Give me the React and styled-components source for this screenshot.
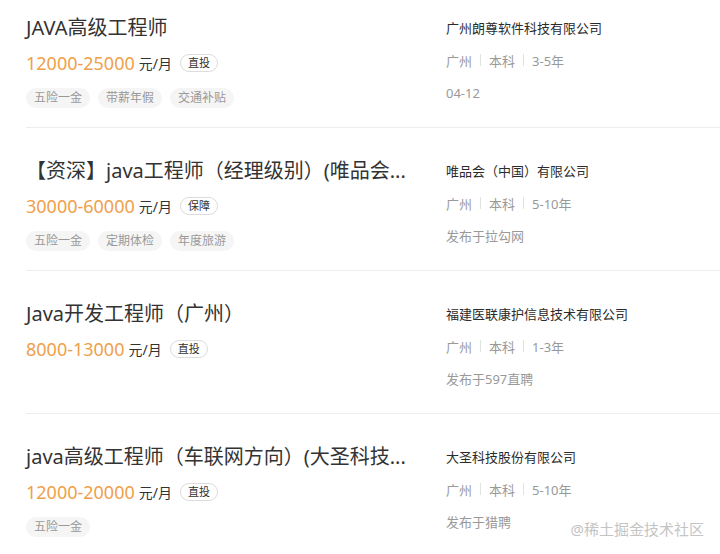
import React from "react";
import styled, { createGlobalStyle } from "styled-components";

const GlobalStyle = createGlobalStyle`
    * { box-sizing: border-box; }
    body {
        margin: 0;
        background: #fff;
        overflow: hidden;
        font-family: "Noto Sans", "Noto Sans CJK SC", sans-serif;
    }
`;

const jobs = [
    {
        title: "JAVA高级工程师",
        salary: "12000-25000",
        badge: "直投",
        tags: ["五险一金", "带薪年假", "交通补贴"],
        company: "广州朗尊软件科技有限公司",
        meta: ["广州", "本科", "3-5年"],
        extra: "04-12",
    },
    {
        title: "【资深】java工程师（经理级别）(唯品会...",
        salary: "30000-60000",
        badge: "保障",
        tags: ["五险一金", "定期体检", "年度旅游"],
        company: "唯品会（中国）有限公司",
        meta: ["广州", "本科", "5-10年"],
        extra: "发布于拉勾网",
    },
    {
        title: "Java开发工程师（广州）",
        salary: "8000-13000",
        badge: "直投",
        tags: [],
        company: "福建医联康护信息技术有限公司",
        meta: ["广州", "本科", "1-3年"],
        extra: "发布于597直聘",
    },
    {
        title: "java高级工程师（车联网方向）(大圣科技...",
        salary: "12000-20000",
        badge: "直投",
        tags: ["五险一金"],
        company: "大圣科技股份有限公司",
        meta: ["广州", "本科", "5-10年"],
        extra: "发布于猎聘",
    },
];

function App() {
    return (
        <>
            <GlobalStyle />
            <Page>
                <List>
                    {jobs.map((job, i) => (
                        <Item key={i}>
                            <Left>
                                <Title>{job.title}</Title>
                                <SalaryRow>
                                    <Salary>{job.salary}</Salary>
                                    <Unit>元/月</Unit>
                                    <Badge>{job.badge}</Badge>
                                </SalaryRow>
                                <Tags>
                                    {job.tags.map((t) => (
                                        <Tag key={t}>{t}</Tag>
                                    ))}
                                </Tags>
                            </Left>
                            <Right>
                                <Company>{job.company}</Company>
                                <Meta>
                                    {job.meta.map((m, j) => (
                                        <React.Fragment key={m}>
                                            {j > 0 && <Sep />}
                                            <span>{m}</span>
                                        </React.Fragment>
                                    ))}
                                </Meta>
                                <Extra>{job.extra}</Extra>
                            </Right>
                        </Item>
                    ))}
                </List>
                <Watermark>@稀土掘金技术社区</Watermark>
            </Page>
        </>
    );
}

const Page = styled.div`
    position: relative;
    width: 720px;
    height: 554px;
    overflow: hidden;
`;

const List = styled.div`
    display: flex;
    flex-direction: column;
    padding-left: 26px;
`;

const Item = styled.div`
    display: grid;
    grid-template-columns: 400px 1fr;
    column-gap: 20px;
    height: 143px;
    padding-top: 29px;
    border-bottom: 1px solid #eeeeee;
    &:first-child {
        height: 128px;
        padding-top: 14px;
    }
`;

const Left = styled.div`
    display: flex;
    flex-direction: column;
    min-width: 0;
`;

const Title = styled.div`
    font-size: 20px;
    line-height: 28px;
    color: #333;
    white-space: nowrap;
`;

const SalaryRow = styled.div`
    display: flex;
    align-items: center;
    height: 24px;
    margin-top: 9px;
`;

const Salary = styled.span`
    font-size: 18px;
    color: #f0a04a;
`;

const Unit = styled.span`
    font-size: 14px;
    color: #333;
    margin-left: 4px;
`;

const Badge = styled.span`
    margin-left: 8px;
    height: 18px;
    line-height: 16px;
    padding: 0 7px;
    border: 1px solid #dcdcdc;
    border-radius: 9px;
    font-size: 11px;
    color: #333;
`;

const Tags = styled.div`
    display: flex;
    gap: 8px;
    margin-top: 13px;
    height: 20px;
`;

const Tag = styled.span`
    height: 20px;
    line-height: 20px;
    padding: 0 8px;
    border-radius: 10px;
    background: #f5f5f5;
    font-size: 12px;
    color: #999;
`;

const Right = styled.div`
    display: flex;
    flex-direction: column;
`;

const Company = styled.div`
    margin-top: 4px;
    font-size: 13px;
    line-height: 20px;
    color: #2b2b2b;
`;

const Meta = styled.div`
    display: flex;
    align-items: center;
    margin-top: 12px;
    height: 20px;
    font-size: 13px;
    color: #999;
`;

const Sep = styled.i`
    width: 1px;
    height: 12px;
    margin: 0 8px;
    background: #e2e2e2;
`;

const Extra = styled.div`
    margin-top: 13px;
    font-size: 13px;
    line-height: 20px;
    color: #999;
`;

const Watermark = styled.div`
    position: absolute;
    right: 16px;
    bottom: 15px;
    font-size: 15px;
    color: #c4c4c4;
    text-shadow: 0 0 2px #fff;
`;

export default App;
